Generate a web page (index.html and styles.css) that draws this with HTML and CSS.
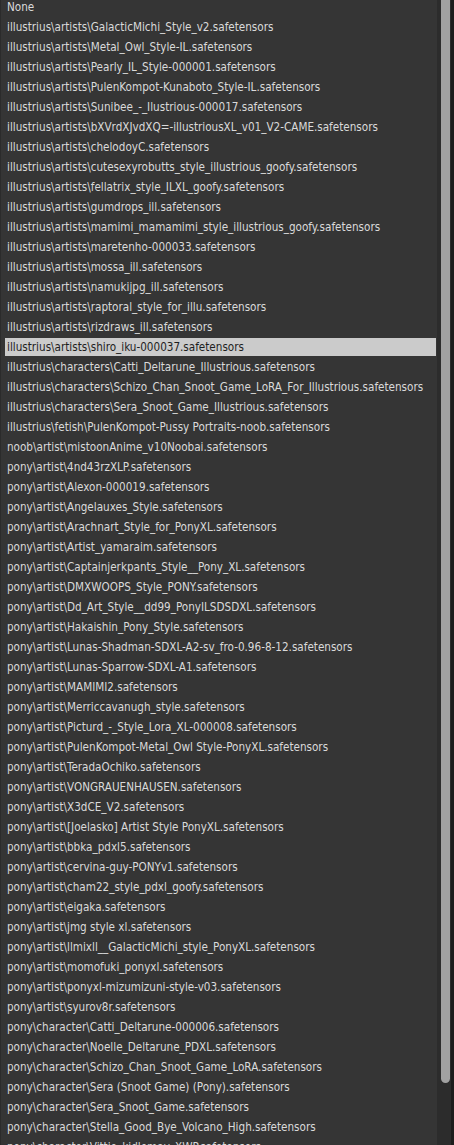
FILE: index.html
```html
<!DOCTYPE html>
<html lang="en">
<head>
<meta charset="utf-8">
<title>LoRA list</title>
<link rel="stylesheet" href="styles.css">
</head>
<body>
<div class="page">
  <div class="menu">
    <div class="list">
      <div class="item">None</div>
      <div class="item">illustrius\artists\GalacticMichi_Style_v2.safetensors</div>
      <div class="item">illustrius\artists\Metal_Owl_Style-IL.safetensors</div>
      <div class="item">illustrius\artists\Pearly_IL_Style-000001.safetensors</div>
      <div class="item">illustrius\artists\PulenKompot-Kunaboto_Style-IL.safetensors</div>
      <div class="item">illustrius\artists\Sunibee_-_Ilustrious-000017.safetensors</div>
      <div class="item">illustrius\artists\bXVrdXJvdXQ=-illustriousXL_v01_V2-CAME.safetensors</div>
      <div class="item">illustrius\artists\chelodoyC.safetensors</div>
      <div class="item">illustrius\artists\cutesexyrobutts_style_illustrious_goofy.safetensors</div>
      <div class="item">illustrius\artists\fellatrix_style_ILXL_goofy.safetensors</div>
      <div class="item">illustrius\artists\gumdrops_ill.safetensors</div>
      <div class="item">illustrius\artists\mamimi_mamamimi_style_illustrious_goofy.safetensors</div>
      <div class="item">illustrius\artists\maretenho-000033.safetensors</div>
      <div class="item">illustrius\artists\mossa_ill.safetensors</div>
      <div class="item">illustrius\artists\namukijpg_ill.safetensors</div>
      <div class="item">illustrius\artists\raptoral_style_for_illu.safetensors</div>
      <div class="item">illustrius\artists\rizdraws_ill.safetensors</div>
      <div class="item is-active">illustrius\artists\shiro_iku-000037.safetensors</div>
      <div class="item">illustrius\characters\Catti_Deltarune_Illustrious.safetensors</div>
      <div class="item">illustrius\characters\Schizo_Chan_Snoot_Game_LoRA_For_Illustrious.safetensors</div>
      <div class="item">illustrius\characters\Sera_Snoot_Game_Illustrious.safetensors</div>
      <div class="item">illustrius\fetish\PulenKompot-Pussy Portraits-noob.safetensors</div>
      <div class="item">noob\artist\mistoonAnime_v10Noobai.safetensors</div>
      <div class="item">pony\artist\4nd43rzXLP.safetensors</div>
      <div class="item">pony\artist\Alexon-000019.safetensors</div>
      <div class="item">pony\artist\Angelauxes_Style.safetensors</div>
      <div class="item">pony\artist\Arachnart_Style_for_PonyXL.safetensors</div>
      <div class="item">pony\artist\Artist_yamaraim.safetensors</div>
      <div class="item">pony\artist\Captainjerkpants_Style__Pony_XL.safetensors</div>
      <div class="item">pony\artist\DMXWOOPS_Style_PONY.safetensors</div>
      <div class="item">pony\artist\Dd_Art_Style__dd99_PonyILSDSDXL.safetensors</div>
      <div class="item">pony\artist\Hakaishin_Pony_Style.safetensors</div>
      <div class="item">pony\artist\Lunas-Shadman-SDXL-A2-sv_fro-0.96-8-12.safetensors</div>
      <div class="item">pony\artist\Lunas-Sparrow-SDXL-A1.safetensors</div>
      <div class="item">pony\artist\MAMIMI2.safetensors</div>
      <div class="item">pony\artist\Merriccavanugh_style.safetensors</div>
      <div class="item">pony\artist\Picturd_-_Style_Lora_XL-000008.safetensors</div>
      <div class="item">pony\artist\PulenKompot-Metal_Owl Style-PonyXL.safetensors</div>
      <div class="item">pony\artist\TeradaOchiko.safetensors</div>
      <div class="item">pony\artist\VONGRAUENHAUSEN.safetensors</div>
      <div class="item">pony\artist\X3dCE_V2.safetensors</div>
      <div class="item">pony\artist\[Joelasko] Artist Style PonyXL.safetensors</div>
      <div class="item">pony\artist\bbka_pdxl5.safetensors</div>
      <div class="item">pony\artist\cervina-guy-PONYv1.safetensors</div>
      <div class="item">pony\artist\cham22_style_pdxl_goofy.safetensors</div>
      <div class="item">pony\artist\eigaka.safetensors</div>
      <div class="item">pony\artist\jmg style xl.safetensors</div>
      <div class="item">pony\artist\llmixll__GalacticMichi_style_PonyXL.safetensors</div>
      <div class="item">pony\artist\momofuki_ponyxl.safetensors</div>
      <div class="item">pony\artist\ponyxl-mizumizuni-style-v03.safetensors</div>
      <div class="item">pony\artist\syurov8r.safetensors</div>
      <div class="item">pony\character\Catti_Deltarune-000006.safetensors</div>
      <div class="item">pony\character\Noelle_Deltarune_PDXL.safetensors</div>
      <div class="item">pony\character\Schizo_Chan_Snoot_Game_LoRA.safetensors</div>
      <div class="item">pony\character\Sera (Snoot Game) (Pony).safetensors</div>
      <div class="item">pony\character\Sera_Snoot_Game.safetensors</div>
      <div class="item">pony\character\Stella_Good_Bye_Volcano_High.safetensors</div>
      <div class="item">pony\character\Vittie_kidlemay_XWP.safetensors</div>
    </div>
  </div>
  <div class="scrollbar"><div class="thumb"></div></div>
  <div class="backdrop"></div>
</div>
</body>
</html>
```
FILE: styles.css
```css
html, body {
  margin: 0;
  padding: 0;
  height: 1145px;
  overflow: hidden;
  background: #1c1c1c;
}
.page {
  display: flex;
  height: 1145px;
  overflow: hidden;
}
.menu {
  width: 437px;
  flex: none;
  background: #353535;
  border-left: 1px solid #2b2b2b;
  padding: 0 0 0 4px;
  box-sizing: border-box;
  overflow: hidden;
}
.list {
  display: flex;
  flex-direction: column;
  gap: 2px;
  margin-top: -2px;
}
.item {
  flex: none;
  height: 18px;
  line-height: 18px;
  padding-left: 2px;
  font-family: "DejaVu Sans Condensed", "DejaVu Sans", sans-serif;
  font-size: 11.6px;
  color: #dadada;
  white-space: nowrap;
}
.item.is-active {
  background: #cbcbcb;
  color: #1e1e1e;
  margin-right: 1px;
}
.scrollbar {
  width: 14px;
  flex: none;
  background: #2c2c2c;
  padding: 0 1px 0 4px;
  box-sizing: border-box;
}
.thumb {
  height: 1083px;
  background: #a1a1a1;
  border-radius: 0 0 5px 5px;
}
.backdrop {
  flex: 1;
  background: #1d1d1d;
}
```
